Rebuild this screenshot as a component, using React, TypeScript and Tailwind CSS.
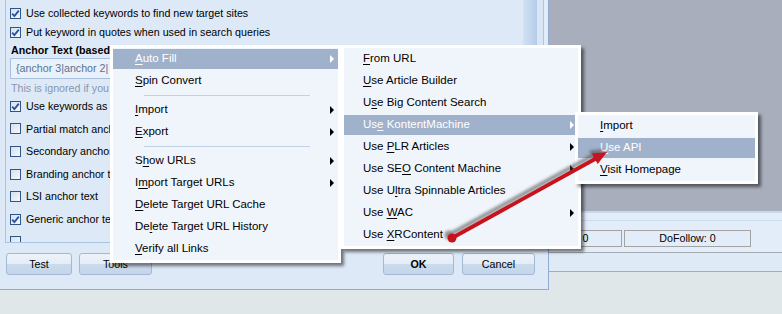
import React from 'react';

type Entry = { t: string; u: number; sub?: boolean; hot?: boolean } | 'sep';

const mainMenu: Entry[] = [
  { t: 'Auto Fill', u: 0, sub: true, hot: true },
  { t: 'Spin Convert', u: 0 },
  'sep',
  { t: 'Import', u: 0, sub: true },
  { t: 'Export', u: 0, sub: true },
  'sep',
  { t: 'Show URLs', u: 1, sub: true },
  { t: 'Import Target URLs', u: 1, sub: true },
  { t: 'Delete Target URL Cache', u: 0 },
  { t: 'Delete Target URL History', u: 2 },
  { t: 'Verify all Links', u: 0 },
];

const fillMenu: Entry[] = [
  { t: 'From URL', u: 0 },
  { t: 'Use Article Builder', u: 0 },
  { t: 'Use Big Content Search', u: 1 },
  { t: 'Use KontentMachine', u: 2, sub: true, hot: true },
  { t: 'Use PLR Articles', u: 4, sub: true },
  { t: 'Use SEO Content Machine', u: 6, sub: true },
  { t: 'Use Ultra Spinnable Articles', u: 5 },
  { t: 'Use WAC', u: 4, sub: true },
  { t: 'Use XRContent', u: 4 },
];

const kmMenu: Entry[] = [
  { t: 'Import', u: 0 },
  { t: 'Use API', u: 0, hot: true },
  { t: 'Visit Homepage', u: 0 },
];

function Label({ t, u }: { t: string; u: number }) {
  return (
    <span className="whitespace-nowrap">
      {t.slice(0, u)}
      <span className="underline decoration-1 underline-offset-2">{t[u]}</span>
      {t.slice(u + 1)}
    </span>
  );
}

function Menu({ items, pos, pl }: { items: Entry[]; pos: string; pl: string }) {
  return (
    <div className={`absolute border-[3px] border-white bg-[#f0f5fb] text-[11.5px] shadow-[3px_3px_3px_rgba(0,0,0,0.5)] ${pos}`}>
      {items.map((it, i) =>
        it === 'sep' ? (
          <div key={i} className="flex h-[7px] items-center">
            <div className="ml-[31px] mr-[28px] h-px flex-1 bg-[#c0d2e8]" />
          </div>
        ) : (
          <div key={i} className="py-px">
            <div
              className={`flex h-[20px] items-center justify-between pr-[4px] ${pl} ${
                it.hot ? 'bg-[#a0b2cb] text-white' : 'text-black'
              }`}
            >
              <Label t={it.t} u={it.u} />
              {it.sub && (
                <span
                  className={`h-0 w-0 border-y-[4px] border-l-[4px] border-y-transparent ${
                    it.hot ? 'border-l-white' : 'border-l-black'
                  }`}
                />
              )}
            </div>
          </div>
        )
      )}
    </div>
  );
}

function Check({ on }: { on?: boolean }) {
  return (
    <span className="flex h-[11px] w-[11px] shrink-0 items-center justify-center border border-[#2f5584] bg-[linear-gradient(135deg,#d6dfea,#f7f9fc)]">
      {on && (
        <svg width="9" height="9" viewBox="0 0 9 9">
          <path d="M1.2 4.6 L3.4 7 L7.8 1.6" fill="none" stroke="#2452a4" strokeWidth="1.8" />
        </svg>
      )}
    </span>
  );
}

function Row({ on, text, h }: { on?: boolean; text?: string; h: string }) {
  return (
    <div className={`flex items-center gap-[5px] whitespace-nowrap ${h}`}>
      <Check on={on} />
      {text && <span>{text}</span>}
    </div>
  );
}

function Btn({ children, w, bold }: { children: React.ReactNode; w: string; bold?: boolean }) {
  return (
    <div
      className={`flex h-[22px] items-center justify-center rounded-[3px] border border-[#a4b8d0] bg-[linear-gradient(to_bottom,#eef3f9_0%,#e4ecf6_50%,#cbdaed_50%,#c6d6ea_100%)] text-[10.7px] ${w} ${
        bold ? 'font-bold' : ''
      }`}
    >
      {children}
    </div>
  );
}

function Dialog() {
  return (
    <div className="flex h-[290px] w-[549px] shrink-0 flex-col border-r border-b border-[#8eaad0] bg-[#dde9f7]">
      <div className="flex h-[250px]">
        <div className="ml-[5px] h-[243px] w-[518px] overflow-hidden border-b border-l border-[#a9c3e0] pl-[4px] pt-[4px] text-[10.7px] leading-none">
          <Row on h="h-[19px]" text="Use collected keywords to find new target sites" />
          <Row on h="h-[19px]" text="Put keyword in quotes when used in search queries" />
          {/* everything below sits under the context menu from x=110 */}
          <div className="w-[102px] overflow-hidden">
            <div className="flex h-[16px] items-center whitespace-nowrap pl-px font-bold">Anchor Text (based on</div>
            <div className="flex h-[21px] w-[480px] items-center border border-[#a9c1df] bg-[#e9f1fa] pl-[5px] text-[#5a7190]">
              {'{anchor 3|anchor 2|'}
            </div>
            <div className="h-[16px] whitespace-nowrap pl-px pt-[4px] text-[#8797ab]">This is ignored if you use</div>
            <Row on h="h-[22.6px]" text="Use keywords as anchor" />
            <Row h="h-[22.6px]" text="Partial match anchor" />
            <Row h="h-[22.6px]" text="Secondary anchor" />
            <Row h="h-[22.6px]" text="Branding anchor text" />
            <Row h="h-[22.6px]" text="LSI anchor text" />
            <Row on h="h-[22.6px]" text="Generic anchor text" />
            <Row h="h-[22.6px]" />
          </div>
        </div>
        <div className="flex h-[243px]">
          <div className="w-[14px] bg-[linear-gradient(to_right,#d2e2f4,#b4cbe9)]" />
          <div className="w-[6px] bg-[#d8e6f6]" />
          <div className="w-px bg-[#aec6e4]" />
          <div className="w-[4px] bg-[#e2ecf8]" />
        </div>
      </div>
      <div className="flex pl-[6px] pt-[3px]">
        <Btn w="w-[66px]">Test</Btn>
        <div className="ml-[7px]">
          <Btn w="w-[73px]">Tools</Btn>
        </div>
        <div className="ml-[231px]">
          <Btn w="w-[71px]" bold>
            OK
          </Btn>
        </div>
        <div className="ml-[8px]">
          <Btn w="w-[73px]">Cancel</Btn>
        </div>
      </div>
    </div>
  );
}

function MainRight() {
  return (
    <div className="flex h-[272px] flex-1 flex-col">
      <div className="h-[211px] bg-[#a8aebc]" />
      <div className="flex h-[18px] flex-col border-t-2 border-[#c6d8ef] bg-[#e3edf9]">
        <div className="h-[7px]" />
        <div className="h-px bg-[#cbdaed]" />
      </div>
      <div className="flex h-[18px] gap-[2px] bg-[#e3edf9] text-[10.7px]">
        <div className="mt-px flex h-[17px] w-[73px] items-center justify-center border border-[#a3a3a3]">0</div>
        <div className="mt-px flex h-[17px] w-[127px] items-center justify-center border border-[#a3a3a3]">DoFollow: 0</div>
      </div>
      <div className="h-[6px] border-b border-[#a5abb4] bg-[#e3edf9]" />
      <div className="flex-1 border-b border-[#8fb0d8] bg-[#dfeaf7]" />
    </div>
  );
}

function RedArrow() {
  return (
    <svg className="pointer-events-none absolute left-0 top-0" width="782" height="314">
      <defs>
        <filter id="soft" x="-20%" y="-20%" width="140%" height="140%">
          <feGaussianBlur stdDeviation="1.6" />
        </filter>
      </defs>
      <g transform="translate(-3,-3)" filter="url(#soft)" opacity="0.6" fill="#4a4a4a">
        <line x1="452" y1="238" x2="595" y2="159" stroke="#4a4a4a" strokeWidth="4" />
        <circle cx="452" cy="238" r="4.5" />
        <polygon points="607,152 597.7,164 591.9,153.6" />
      </g>
      <g fill="#c8121c">
        <line x1="452" y1="238" x2="595" y2="159" stroke="#c8121c" strokeWidth="3.8" strokeLinecap="round" />
        <circle cx="452" cy="238" r="4.5" />
        <polygon points="607,152 597.7,164 591.9,153.6" />
      </g>
    </svg>
  );
}

export default function App() {
  return (
    <div className="relative h-[314px] w-[782px] overflow-hidden bg-[#dfe7e9] font-['Liberation_Sans',Arial,sans-serif] text-black">
      <div className="flex items-start">
        <Dialog />
        <MainRight />
      </div>
      <Menu items={mainMenu} pos="left-[110px] top-[45px] w-[231px]" pl="pl-[22px]" />
      <Menu items={fillMenu} pos="left-[341px] top-[45px] w-[240px]" pl="pl-[19px]" />
      <Menu items={kmMenu} pos="left-[575px] top-[112px] w-[183px]" pl="pl-[22px]" />
      <RedArrow />
    </div>
  );
}
